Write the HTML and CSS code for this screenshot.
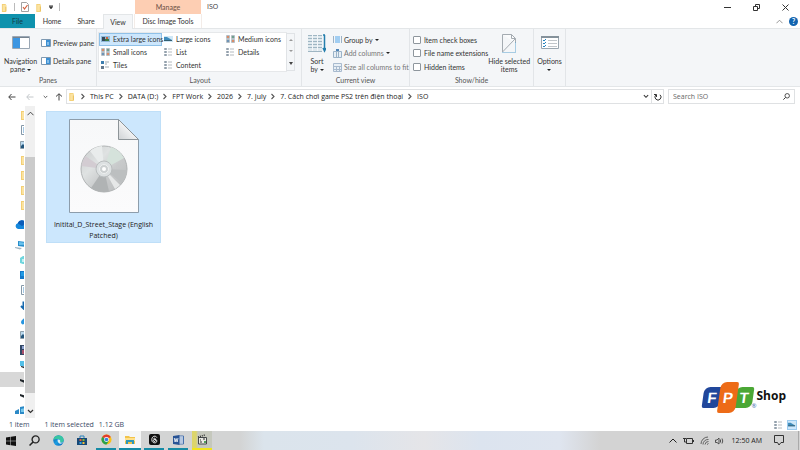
FILE: index.html
```html
<!DOCTYPE html>
<html lang="en">
<head>
<meta charset="utf-8">
<title>ISO</title>
<link rel="stylesheet" href="styles.css">
</head>
<body>
<svg class="defs" aria-hidden="true">
  <defs>
    <linearGradient id="disc-fill" x1="0" y1="0" x2="1" y2="1"><stop offset="0" stop-color="#c9cccd"/><stop offset=".35" stop-color="#dfe2e2"/><stop offset=".6" stop-color="#c8cacb"/><stop offset="1" stop-color="#b9bbbc"/></linearGradient>
    <linearGradient id="sheet-fill" x1="0" y1="0" x2="0" y2="1"><stop offset="0" stop-color="#f7f8f9"/><stop offset="1" stop-color="#fbfbfc"/></linearGradient>
    <linearGradient id="fold-fill" x1="0" y1="1" x2="1" y2="0"><stop offset="0" stop-color="#cfd2d4"/><stop offset=".5" stop-color="#f1f2f3"/><stop offset="1" stop-color="#fff"/></linearGradient>
    <linearGradient id="edge-fill" x1="0" y1="0" x2="1" y2="1"><stop offset="0" stop-color="#0c59a4"/><stop offset=".5" stop-color="#1b9de2"/><stop offset="1" stop-color="#0a63b8"/></linearGradient>
  </defs>
  <symbol id="folder" viewBox="0 0 8 10"><path d="M1 1h4l1 1v8H1z" fill="#f3cf74"/><path d="M2 2h4v7H2z" fill="#fbe3a1"/><path d="M5 4h1v5H5z" fill="#e9bd55"/></symbol>
  <symbol id="doc" viewBox="0 0 8 10"><path d="M1.5.5h6v9h-6z" fill="#fff" stroke="#8598a8"/><path d="M3 3h4M3 5h4M3 7h4" stroke="#4b92c9"/></symbol>
  <symbol id="picture" viewBox="0 0 8 10"><path d="M.5 1.5h7v7h-7z" fill="#b9d9ef" stroke="#8fa0ac"/><path d="M1 6l2-2 2 2 3-1v3H1z" fill="#24567c"/></symbol>
  <symbol id="cloud" viewBox="0 0 14 10"><path d="M3 9a3 3 0 0 1-.3-5.8A4.5 4.5 0 0 1 11 3a3 3 0 0 1 0 6z" fill="#1688dc"/><path d="M2.700 3.200A4.500 4.500 0 0 1 11 3L7 6z" fill="#0a5cb9"/></symbol>
  <symbol id="pc" viewBox="0 0 12 10"><path d="M3 1l8 1v5l-8-1z" fill="#278dcb"/><path d="M4 2l6 .8v2L4 5z" fill="#69c3ee"/><path d="M0 7l7 1-2 1.500L0 8z" fill="#9fb3bf"/></symbol>
  <symbol id="cube" viewBox="0 0 8 10"><path d="M0 3l3-2h5v8H3L0 8z" fill="#6ed5dd"/><path d="M2 4h4v3H2z" fill="#c3f1f2"/></symbol>
  <symbol id="desktop" viewBox="0 0 8 10"><path d="M0 1h8v8H0z" fill="#1479c9"/><path d="M1 2h6v4H1z" fill="#219ae4"/></symbol>
  <symbol id="down" viewBox="0 0 8 10"><path d="M3.500 1.500v7M1 6l3 3 3-3" fill="none" stroke="#1769ae" stroke-width="2"/></symbol>
  <symbol id="note" viewBox="0 0 8 10"><path d="M1 7c1-3 3-3 4-5v6c-1 2-4 2-4-1z" fill="#2795df"/></symbol>
  <symbol id="film" viewBox="0 0 8 10"><path d="M0 0h8v10H0z" fill="#334865"/><path d="M2 1h6v3H2z" fill="#8fa2d1"/><path d="M2 5h6v4H2z" fill="#a8516c"/></symbol>
  <symbol id="osdrive" viewBox="0 0 8 10"><path d="M0 1h8v5H0z" fill="#53bfe8"/><path d="M1 6l5 1v2L1 7z" fill="#25313b"/></symbol>
  <symbol id="drive" viewBox="0 0 8 10"><path d="M0 4l6 2v2.500L0 6z" fill="#20262b"/></symbol>
  <symbol id="network" viewBox="0 0 12 10"><path d="M0 6l4-2v5H0zM5 2l6-1v8H5z" fill="#2b89c6"/><path d="M6 4l4-1v4H6z" fill="#76c8ec"/></symbol>
  <symbol id="pane-left" viewBox="0 0 18 13"><path d="M.5.5h17v12H.5z" fill="#fff" stroke="#9aa7b4"/><path d="M1 1h7v11H1z" fill="#3c96e2"/><path d="M1 1h16v1H1z" fill="#76838f"/></symbol>
  <symbol id="pane-right" viewBox="0 0 10 8"><path d="M.5.5h9v7h-9z" fill="#fff" stroke="#7d99b2"/><path d="M5 1h4v6H5z" fill="#3b8fd3"/><path d="M6 3h2v3H6z" fill="#83bce8"/></symbol>
  <symbol id="thumb" viewBox="0 0 9 8"><path d="M0 1h9v6H0z" fill="#8fb9d7"/><path d="M1 2h3v4H1z" fill="#35495a"/><path d="M4 4h4v2H4z" fill="#3d7b42"/><path d="M5 2h2v2H5z" fill="#c9643b"/></symbol>
  <symbol id="thumb-large" viewBox="0 0 9 8"><path d="M0 1h9v6H0z" fill="#cfe7f6"/><path d="M0 2h3l5 3v1H0z" fill="#3f8dbd"/><path d="M0 5h8v1H0z" fill="#345f72"/></symbol>
  <symbol id="thumb-grid" viewBox="0 0 9 8"><path d="M.5.5h3v3h-3zM5.500.5h3v3h-3zM.5 4.500h3v3h-3zM5.500 4.500h3v3h-3z" fill="#eef2f4" stroke="#b5bec5"/><path d="M1 1h2v2H1zM6 5h2v2H6z" fill="#d98c68"/><path d="M6 1h2v2H6z" fill="#6fa18d"/><path d="M1 5h2v2H1z" fill="#6d93b6"/></symbol>
  <symbol id="thumb-list" viewBox="0 0 9 8"><path d="M.5.5h2v1h-2zM.5 3.500h2v1h-2zM.5 6.500h2v1h-2z" fill="#c8dbe8" stroke="#94a1ac"/><path d="M4 1h4M4 4h4M4 7h4" stroke="#b4babf"/></symbol>
  <symbol id="thumb-tiles" viewBox="0 0 9 8"><path d="M0 0h3v3H0z" fill="#3c7eaf"/><path d="M0 5h3v3H0z" fill="#64798c"/><path d="M4 1h4M4 3h2M4 6h4" stroke="#9fa9b0"/></symbol>
  <symbol id="columns" viewBox="0 0 9 9"><path d="M.5 1v7M8.500 1v7" stroke="#9cb2c5"/><path d="M2 1h5v7H2z" fill="#a2cef2"/></symbol>
  <symbol id="columns-add" viewBox="0 0 9 9"><path d="M.5 2.500h8v6h-8zM3.500 2v6M5.500 2v6" fill="#e8eff5" stroke="#9bb3c8"/><path d="M3 0h3v2H3z" fill="#4f85b8"/></symbol>
  <symbol id="columns-fit" viewBox="0 0 9 9"><path d="M.5.5h8v8h-8zM0 3.500h9M3.500 3v6M6.500 3v6M0 6.500h9" fill="#e8eff5" stroke="#a8bace"/></symbol>
  <symbol id="sort" viewBox="0 0 18 19"><path d="M0 1h14v17H0z" fill="#dfe9ee"/><path d="M0 1.500h14M0 4.500h14M0 7.500h14M0 10.500h14M0 13.500h14M0 17.500h14" stroke="#9fb6c3"/><path d="M4.500 1v16M9.500 1v16" stroke="#f4f6f9"/><path d="M16.500 1v15M15 14l1.500 3 1.500-3M15 1h2" fill="none" stroke="#237eac" stroke-width="1.500"/></symbol>
  <symbol id="hide" viewBox="0 0 15 19"><path d="M.5.5h9l4 4V9M.5.5V18" fill="#fafbfc" stroke="#a4abb1"/><path d="M9.500.5v4h4" fill="none" stroke="#a4abb1"/><path d="M.5 18L13 5" stroke="#a4abb1"/><path d="M.5 18.500h13V8" fill="none" stroke="#5aa3cf" stroke-dasharray="1 1"/></symbol>
  <symbol id="options" viewBox="0 0 18 13"><path d="M.5.5h17v12H.5z" fill="#fff" stroke="#9aa6af"/><path d="M0 0h18v2H0z" fill="#85929b"/><path d="M2 4l1 1 2-2M2 7l1 1 2-2M2 10l1 1 2-2" fill="none" stroke="#2583be"/><path d="M7 4.500h9M7 7.500h9M7 10.500h9" stroke="#c1c6ca"/></symbol>
  <symbol id="chev-right" viewBox="0 0 4 7"><path d="M.5 1L3 3.500.5 6" fill="none" stroke="#555" stroke-width="1.100"/></symbol>
  <symbol id="chev-down" viewBox="0 0 7 5"><path d="M1 1l2.500 2.500L6 1" fill="none" stroke="currentColor" stroke-width="1.200"/></symbol>
  <symbol id="chev-up" viewBox="0 0 8 5"><path d="M.5 4.500L4 1l3.500 3.500" fill="none" stroke="currentColor"/></symbol>
  <symbol id="arrow" viewBox="0 0 8 8"><path d="M7.500 4H.8M3.500 1L.8 4l2.700 3" fill="none" stroke="currentColor"/></symbol>
  <symbol id="lens" viewBox="0 0 10 10"><circle cx="6" cy="4" r="3.200" fill="none" stroke="currentColor" stroke-width="1.200"/><path d="M3.700 6.300L.5 9.500" stroke="currentColor" stroke-width="1.400"/></symbol>
</svg>

<header class="titlebar">
  <div class="quick">
    <svg width="7" height="9"><use href="#folder"/></svg>
    <span class="tick"></span>
    <button aria-label="Properties"><svg width="8" height="10" viewBox="0 0 8 10"><path d="M.5.5h5l2 2v7h-7z" fill="#fff" stroke="#a2a2a2"/><path d="M2 5l1.500 2L6.500 3" fill="none" stroke="#d4613f" stroke-width="1.200"/></svg></button>
    <button aria-label="New folder"><svg width="8" height="9"><use href="#folder"/></svg></button>
    <button aria-label="Customize"><svg width="4" height="4" viewBox="0 0 4 4"><path d="M0 .5h4M0 1.500h4L2 4z" fill="#333" stroke="#333" stroke-width=".5"/></svg></button>
    <span class="tick"></span>
  </div>
  <div class="context">Manage</div>
  <h1>ISO</h1>
  <div class="window-buttons">
    <button aria-label="Minimize"><svg width="7" height="7" viewBox="0 0 7 7"><path d="M0 3.500h7" stroke="#333"/></svg></button>
    <button aria-label="Restore"><svg width="7" height="7" viewBox="0 0 7 7"><path d="M.5 2.500h4v4h-4zM2.500 2V.5h4v4H5" fill="none" stroke="#333"/></svg></button>
    <button aria-label="Close"><svg width="7" height="7" viewBox="0 0 7 7"><path d="M.5.5l6 6M6.500.5l-6 6" stroke="#333"/></svg></button>
  </div>
</header>

<nav class="tabs">
  <button class="file">File</button>
  <button class="tab">Home</button>
  <button class="tab">Share</button>
  <button class="tab current">View</button>
  <button class="tab tools">Disc Image Tools</button>
  <div class="help">
    <button aria-label="Collapse ribbon"><svg width="7" height="5"><use href="#chev-up"/></svg></button>
    <button class="help-mark">?</button>
  </div>
</nav>

<section class="ribbon">
  <div class="group panes">
    <div class="group-body">
      <button class="big"><svg width="18" height="13"><use href="#pane-left"/></svg><span>Navigation<br>pane <i class="caret"></i></span></button>
      <div class="pane-list">
        <button class="item"><svg width="10" height="8"><use href="#pane-right"/></svg>Preview pane</button>
        <button class="item"><svg width="10" height="8"><use href="#pane-right"/></svg>Details pane</button>
      </div>
    </div>
    <h2>Panes</h2>
  </div>
  <div class="group layout">
    <div class="group-body">
      <div class="gallery">
        <button class="item selected"><svg width="9" height="8"><use href="#thumb"/></svg>Extra large icons</button>
        <button class="item"><svg width="9" height="8"><use href="#thumb-large"/></svg>Large icons</button>
        <button class="item"><svg width="9" height="8"><use href="#thumb-grid"/></svg>Medium icons</button>
        <button class="item"><svg width="9" height="8"><use href="#thumb-grid"/></svg>Small icons</button>
        <button class="item"><svg width="9" height="8"><use href="#thumb-list"/></svg>List</button>
        <button class="item"><svg width="9" height="8"><use href="#thumb-list"/></svg>Details</button>
        <button class="item"><svg width="9" height="8"><use href="#thumb-tiles"/></svg>Tiles</button>
        <button class="item"><svg width="9" height="8"><use href="#thumb-list"/></svg>Content</button>
      </div>
      <div class="spinner">
        <button aria-label="Previous row"><i class="caret up"></i></button>
        <button aria-label="Next row"><i class="caret faint"></i></button>
        <button aria-label="More layouts"><i class="caret more"></i></button>
      </div>
    </div>
    <h2>Layout</h2>
  </div>
  <div class="group view">
    <div class="group-body">
      <button class="big sort"><svg width="18" height="19"><use href="#sort"/></svg><span>Sort<br>by <i class="caret"></i></span></button>
      <div class="stack">
        <button class="item"><svg width="9" height="9"><use href="#columns"/></svg>Group by <i class="caret"></i></button>
        <button class="item dim"><svg width="9" height="9"><use href="#columns-add"/></svg>Add columns <i class="caret"></i></button>
        <button class="item dim"><svg width="9" height="9"><use href="#columns-fit"/></svg>Size all columns to fit</button>
      </div>
    </div>
    <h2>Current view</h2>
  </div>
  <div class="group show">
    <div class="group-body">
      <div class="stack">
        <label class="item"><input type="checkbox">Item check boxes</label>
        <label class="item"><input type="checkbox">File name extensions</label>
        <label class="item"><input type="checkbox">Hidden items</label>
      </div>
      <button class="big"><svg width="15" height="19"><use href="#hide"/></svg><span>Hide selected<br>items</span></button>
    </div>
    <h2>Show/hide</h2>
  </div>
  <div class="group options">
    <div class="group-body">
      <button class="big"><svg width="18" height="13"><use href="#options"/></svg><span>Options<br><i class="caret"></i></span></button>
    </div>
  </div>
</section>

<div class="addressbar">
  <div class="history">
    <button aria-label="Back"><svg width="8" height="8"><use href="#arrow"/></svg></button>
    <button aria-label="Forward" class="off"><svg width="8" height="8"><use href="#arrow"/></svg></button>
    <button aria-label="Recent locations" class="small"><svg width="5" height="4"><use href="#chev-down"/></svg></button>
    <button aria-label="Up" class="upward"><svg width="8" height="8"><use href="#arrow"/></svg></button>
  </div>
  <div class="path">
    <svg width="8" height="9"><use href="#folder"/></svg>
    <svg width="4" height="7"><use href="#chev-right"/></svg><a href="#">This PC</a>
    <svg width="4" height="7"><use href="#chev-right"/></svg><a href="#">DATA (D:)</a>
    <svg width="4" height="7"><use href="#chev-right"/></svg><a href="#">FPT Work</a>
    <svg width="4" height="7"><use href="#chev-right"/></svg><a href="#">2026</a>
    <svg width="4" height="7"><use href="#chev-right"/></svg><a href="#">7. July</a>
    <svg width="4" height="7"><use href="#chev-right"/></svg><a href="#">7. Cách chơi game PS2 trên điện thoại</a>
    <svg width="4" height="7"><use href="#chev-right"/></svg><a href="#">ISO</a>
    <div class="path-end">
      <button aria-label="Previous locations"><svg width="6" height="5"><use href="#chev-down"/></svg></button>
      <button aria-label="Refresh" class="refresh"><svg width="8" height="8" viewBox="0 0 8 8"><path d="M6 1.800A3 3 0 1 1 2 1.800M0 1.500h2.500V4" fill="none" stroke="#333"/></svg></button>
    </div>
  </div>
  <div class="search">
    <input type="search" placeholder="Search ISO" aria-label="Search ISO">
    <svg width="7" height="7"><use href="#lens"/></svg>
  </div>
</div>

<main>
  <aside class="tree">
    <ul>
      <li><svg width="8" height="10"><use href="#folder"/></svg></li>
      <li><svg width="8" height="10"><use href="#doc"/></svg></li>
      <li><svg width="8" height="10"><use href="#picture"/></svg></li>
      <li><svg width="8" height="10"><use href="#folder"/></svg></li>
      <li><svg width="8" height="10"><use href="#folder"/></svg></li>
      <li><svg width="8" height="10"><use href="#folder"/></svg></li>
      <li><svg width="8" height="10"><use href="#folder"/></svg></li>
    </ul>
    <ul>
      <li class="root"><svg width="14" height="10"><use href="#cloud"/></svg></li>
    </ul>
    <ul>
      <li class="root"><svg width="12" height="10"><use href="#pc"/></svg></li>
      <li><svg width="8" height="10"><use href="#cube"/></svg></li>
      <li><svg width="8" height="10"><use href="#desktop"/></svg></li>
      <li><svg width="8" height="10"><use href="#doc"/></svg></li>
      <li><svg width="8" height="10"><use href="#down"/></svg></li>
      <li><svg width="8" height="10"><use href="#note"/></svg></li>
      <li><svg width="8" height="10"><use href="#picture"/></svg></li>
      <li><svg width="8" height="10"><use href="#film"/></svg></li>
      <li><svg width="8" height="10"><use href="#osdrive"/></svg></li>
      <li class="active"><svg width="8" height="10"><use href="#drive"/></svg></li>
      <li><svg width="8" height="10"><use href="#drive"/></svg></li>
      <li class="root"><svg width="12" height="10"><use href="#network"/></svg></li>
    </ul>
  </aside>
  <div class="scrollbar">
    <button aria-label="Scroll up"><svg width="7" height="5"><use href="#chev-up"/></svg></button>
    <div class="track"><div class="thumb"></div></div>
    <button aria-label="Scroll down"><svg width="7" height="5"><use href="#chev-down"/></svg></button>
  </div>
  <section class="files">
    <figure class="tile">
      <svg width="70" height="94" viewBox="0 0 70 94">
        <path d="M.5.5h49l20 20v73H.5z" fill="url(#sheet-fill)" stroke="#8d9dab"/>
        <path d="M49.500.5v20h20z" fill="url(#fold-fill)" stroke="#8d9498"/>
        <circle cx="35" cy="50" r="23" fill="url(#disc-fill)" stroke="#b0b3b4"/>
        <path d="M35 50L21 32a23 23 0 0 1 12-5z" fill="#e9ecec"/>
        <path d="M35 50L42 28a23 23 0 0 1 13 11z" fill="#d5e2db"/>
        <path d="M35 50L12.500 47a23 23 0 0 1 4-10z" fill="#d3ccd2"/>
        <path d="M35 50L58 51a23 23 0 0 1-5 13z" fill="#bcbfc0"/>
        <path d="M35 50L51 66a23 23 0 0 1-5 4z" fill="#e6e8e8"/>
        <path d="M35 50L22 69a23 23 0 0 0 18 3.500z" fill="#b0b3b4"/>
        <circle cx="35" cy="50" r="8" fill="#dde1e2" stroke="#b9bdbe"/>
        <circle cx="35" cy="50" r="4.500" fill="#ccd0d1" stroke="#eff1f1"/>
        <circle cx="35" cy="50" r="2" fill="#fff"/>
      </svg>
      <figcaption>Initital_D_Street_Stage (English Patched)</figcaption>
    </figure>
  </section>
  <div class="brand">
    <div class="marks"><span class="mark blue"><b>F</b></span><span class="mark orange"><b>P</b></span><span class="mark green"><b>T</b></span></div>
    <span class="registered">®</span>
    <strong>Shop</strong>
  </div>
</main>

<footer class="status">
  <span class="cell">1 item</span>
  <span class="cell">1 item selected</span>
  <span class="cell size">1.12 GB</span>
  <div class="modes">
    <button aria-label="Details view"><svg width="9" height="8"><use href="#thumb-list"/></svg></button>
    <button aria-label="Large icons view" class="on"><svg width="8" height="7"><use href="#thumb-large"/></svg></button>
  </div>
</footer>

<nav class="taskbar">
  <button aria-label="Start" class="start"><svg width="10" height="10" viewBox="0 0 10 10"><path d="M0 1.500l4.500-.7v4H0zM5 .700L10 0v4.800H5zM0 5.300h4.500v4L0 8.600zM5 5.300h5V10l-5-.7z" fill="#111"/></svg></button>
  <button aria-label="Search"><svg width="11" height="11"><use href="#lens"/></svg></button>
  <button aria-label="Edge"><svg width="11" height="11" viewBox="0 0 11 11"><circle cx="5.500" cy="5.500" r="5.200" fill="url(#edge-fill)"/><path d="M.4 5A5.200 5.200 0 0 1 10.700 5c.1 2-2 2.800-3.700 2.200C8 5 6 3.700 4 4 2 4 .8 5 .4 5z" fill="#38c6a2"/><path d="M4.600 4.600c2-.5 3.300 1 2.400 2.600 1 .8 2.500.5 3.300-.1C8.500 10 4 9 4.600 4.600z" fill="#d9eef5"/></svg></button>
  <button aria-label="Store"><svg width="10" height="11" viewBox="0 0 10 11"><path d="M3 3V1h4v2" fill="none" stroke="#2682bd"/><path d="M0 3h10v7H0z" fill="#174977"/><path d="M2.500 4h2v2h-2z" fill="#e95b3c"/><path d="M5.500 4h2v2h-2z" fill="#81bc38"/><path d="M2.500 7h2v2h-2z" fill="#36a5e8"/><path d="M5.500 7h2v2h-2z" fill="#f5bf35"/></svg></button>
  <button aria-label="Chrome" class="open"><svg width="11" height="11" viewBox="0 0 12 12"><circle cx="6" cy="6" r="5.500" fill="#fbc116"/><path d="M6 6L1.200 3.300A5.500 5.500 0 0 1 10.800 3.300z" fill="#e33b2e"/><path d="M6 6L1.200 3.300A5.500 5.500 0 0 0 6 11.500l2.500-4z" fill="#2ba14b"/><circle cx="6" cy="6" r="2.700" fill="#fff"/><circle cx="6" cy="6" r="2" fill="#3b7de0"/></svg></button>
  <button aria-label="File Explorer" class="open front"><svg width="10" height="10" viewBox="0 0 10 10"><path d="M0 1h4l1 1h5v7H0z" fill="#f1c34a"/><path d="M0 3h10v3H0z" fill="#ffe08a"/><path d="M1 5h8v4H7V7H3v2H1z" fill="#2f97b7"/></svg></button>
  <button aria-label="Threads" class="open"><svg width="11" height="11" viewBox="0 0 11 11"><rect width="11" height="11" rx="2" fill="#111"/><path d="M7.800 3.500C7 1.500 3 1.500 2.800 5.500s4.900 4.200 5 1.700C8 5 4.200 5 4.200 6.500s3 1.500 2.500-1C6.500 4 5 4 4.500 4.600" fill="none" stroke="#fff" stroke-width=".9"/></svg></button>
  <button aria-label="Word" class="open"><svg width="11" height="10" viewBox="0 0 11 10"><path d="M5.500 1h5v8h-5z" fill="#fff" stroke="#4771ad"/><path d="M6 3h4M6 5h4M6 7h4" stroke="#6e91c3"/><path d="M0 1l6.500-1v10L0 9z" fill="#285395"/><path d="M1.300 3l.8 4 1-3.500 1 3.500.9-4" fill="none" stroke="#fff" stroke-width=".8"/></svg></button>
  <button aria-label="Recorder" class="open alert"><svg width="11" height="11" viewBox="0 0 11 11"><path d="M1.500 3.500h8v6.500h-8z" fill="#e8e9e2" stroke="#44484a"/><path d="M1 3l7-2" stroke="#333" stroke-width="1.500" stroke-dasharray="1 1"/><path d="M3 6h1M6 5h2M3 8h2" stroke="#333"/><path d="M7 7h2v2H7z" fill="#53a05d"/></svg></button>
  <div class="tray">
    <svg width="8" height="5"><use href="#chev-up"/></svg>
    <svg width="11" height="8" viewBox="0 0 11 8"><path d="M3.500 1.500h6v5h-6zM10.500 3v2M0 1.500h3M1.500 1.500v3.500h2" fill="none" stroke="#333"/></svg>
    <svg width="9" height="9" viewBox="0 0 9 9"><path d="M1 8A7 7 0 0 1 8 1M3 8.500A5 5 0 0 1 8.500 3.500M5 8.500A3.500 3.500 0 0 1 8.500 5.500M7 8.500L8.500 7.500" fill="none" stroke="#555" stroke-width=".9"/></svg>
    <svg width="9" height="8" viewBox="0 0 9 8"><path d="M.5 3h1.500l2-2v6L2 5.500H.5zM5.500 2.500v3M7 1.500q1.500 2.500 0 5" fill="none" stroke="#444" stroke-width=".9"/></svg>
    <time>12:50 AM</time>
    <button aria-label="Notifications"><svg width="10" height="11" viewBox="0 0 10 11"><path d="M.5.5h9v7H7L5 10 3.500 7.500h-3z" fill="none" stroke="#333"/></svg></button>
    <span class="peek"></span>
  </div>
</nav>
</body>
</html>
```
FILE: styles.css
```css
* { box-sizing: border-box; }

body {
  margin: 0;
  min-height: 100vh;
  display: grid;
  grid-template-rows: auto auto auto auto 1fr auto auto;
  background: #fff;
  color: #333;
  font: 7px/8px "Open Sans", "Noto Sans", sans-serif;
}

button {
  display: flex;
  align-items: center;
  justify-content: center;
  margin: 0;
  padding: 0;
  border: 0;
  background: none;
  color: inherit;
  font: inherit;
  white-space: nowrap;
}

svg { display: block; flex: none; }
ul { margin: 0; padding: 0; list-style: none; }
h1, h2 { margin: 0; font: inherit; }
.defs { position: absolute; width: 0; height: 0; }

.caret {
  display: inline-block;
  vertical-align: middle;
  border: 2px solid transparent;
  border-top-color: #222;
  border-bottom: 0;
}
.caret.up { border-top: 0; border-bottom: 2px solid #999; }
.caret.faint { border-top-color: #999; }
.caret.more { border-top-color: #444; border-width: 3px 2px 0; }

/* Title bar */
.titlebar { display: flex; height: 14px; }
.quick { display: flex; align-items: center; gap: 6px; width: 135px; padding-left: 1px; }
.tick { width: 1px; height: 8px; background: #bbb; }
.context { width: 66px; background: #fdceb3; color: #6b4f43; line-height: 14px; text-align: center; }
.titlebar h1 { padding-left: 6px; line-height: 14px; }
.window-buttons { display: flex; gap: 22px; margin-left: auto; padding-right: 11px; }

/* Title, tabs and ribbon share a narrower face than the file area */
.context, .tabs, .ribbon { font-family: Lato, "Open Sans", sans-serif; }

/* Ribbon tabs */
.tabs { display: flex; height: 14px; }
.file { width: 35px; background: #0f92ad; color: #123b46; }
.tab { width: 34px; }
.current { height: 15px; background: #f4f6f8; border: 1px solid #e3e6e8; border-bottom: 0; width: 30px; z-index: 1; }
.tools { width: 68px; margin-left: 1px; border: 1px solid #f3ece8; border-width: 0 1px; }
.help { display: flex; align-items: center; gap: 6px; margin-left: auto; padding-right: 2px; color: #888; }
.help-mark { width: 9px; height: 9px; border-radius: 50%; background: #1264b0; color: #fff; font-weight: 700; }

/* Ribbon */
.ribbon { display: flex; height: 59px; background: #f4f6f8; border: 1px solid #e3e6e8; border-width: 1px 0; }
.group { display: flex; flex-direction: column; justify-content: space-between; padding: 4px 0 1px; border-right: 1px solid #e2e5e8; }
.group h2 { color: #555; line-height: 10px; text-align: center; }
.group-body { display: flex; height: 41px; }
.item { display: flex; align-items: center; justify-content: flex-start; gap: 3px; white-space: nowrap; }
.item.dim { color: #777; }
.big { flex-direction: column; justify-content: space-between; }
.big svg { margin-top: 3px; }
.big span { height: 17px; }

.panes { width: 97px; }
.panes .big { width: 41px; }
.pane-list { display: grid; padding: 1px 0 4px; }
.pane-list .item { gap: 2px; }

.layout { width: 205px; padding-left: 2px; }
.gallery {
  display: grid;
  grid-template-columns: 63px 62px 62px;
  grid-template-rows: repeat(3, 1fr);
  height: 38px;
  background: #fff;
  outline: 1px solid #e6e8ea;
}
.gallery .item { padding-left: 2px; }
.gallery .selected { padding-left: 1px; background: #cce6fc; border: 1px solid #8fc1e8; }
.spinner { display: grid; width: 9px; height: 38px; border: 1px solid #e0e3e6; }

.view { width: 108px; }
.view .big { width: 30px; }
.stack { display: grid; height: 41px; grid-template-rows: repeat(3, 1fr); }
.view .stack { margin-left: 1px; }
.view .item { gap: 2px; }
.sort svg, .show .big svg { margin-top: 1px; }

.show { width: 124px; }
.show .group-body { justify-content: space-between; padding: 0 5px 0 3px; }
.show input { appearance: none; width: 8px; height: 8px; margin: 0; border: 1px solid #8e969d; border-radius: 1px; background: #fff; }

.options { width: 32px; }
.options .big { width: 31px; }

/* Address bar */
.addressbar { display: flex; gap: 4px; height: 19px; padding: 2px 5px 2px 0; }
.history { display: flex; align-items: center; gap: 10px; width: 62px; padding-left: 8px; color: #444; }
.history .off { color: #c4c8cb; }
.history .small { margin: 0 -3px 0 -1px; }
.upward svg { transform: rotate(90deg); }
.path { display: flex; flex: 1; align-items: center; gap: 5px; padding-left: 1px; border: 1px solid #dfe1e3; }
.path a { color: #222; text-decoration: none; white-space: nowrap; }
.path-end { display: flex; align-items: stretch; align-self: stretch; margin-left: auto; gap: 2px; }
.refresh { width: 12px; border-left: 1px solid #dfe1e3; }
.search { display: flex; align-items: center; width: 127px; padding: 0 4px; border: 1px solid #dfe1e3; }
.search input { flex: 1; min-width: 0; padding: 0; border: 0; outline: 0; background: none; color: #333; font: inherit; }
.search input::placeholder { color: #666; opacity: 1; }

/* Navigation tree and files */
main { position: relative; display: flex; }
.tree { width: 25px; padding-top: 1px; overflow: hidden; border-right: 1px solid #fff; }
.tree ul + ul { margin-top: 5px; }
.tree li { display: flex; align-items: center; height: 15px; padding-left: 20px; }
.tree .root { padding-left: 15px; }
.tree .active { background: #d8d8d8; }
.scrollbar { display: flex; flex-direction: column; width: 10px; background: #f0f0f0; }
.scrollbar button { height: 14px; }
.track { flex: 1; padding: 37px 0 11px; }
.thumb { height: 100%; background: #cbcbcb; }
.files { flex: 1; padding: 5px 0 0 11px; }
.tile { width: 115px; margin: 0; padding: 7px 6px 1px; background: #cce7fd; border: 1px solid #bfdff8; }
.tile svg { margin: 0 auto 6px; }
.tile figcaption { color: #222; line-height: 11px; text-align: center; }

.brand { position: absolute; right: 14px; bottom: 5px; display: flex; align-items: center; color: #111; }
.marks { display: flex; align-items: center; }
.mark { display: grid; place-items: center; width: 18px; height: 21px; margin-right: -2px; border-radius: 6px 2px; transform: skewX(-8deg); color: #fff; font: 15px/18px "Liberation Sans", sans-serif; }
.blue { background: #21479b; }
.orange { height: 31px; background: #ed6b17; z-index: 1; }
.green { background: #4ba735; }
.registered { align-self: flex-end; margin-bottom: 3px; color: #356ba9; font-size: 6px; }
.brand strong { font-size: 12px; line-height: 16px; margin-bottom: 4px; }

/* Status bar */
.status { display: flex; align-items: center; height: 13px; padding: 0 4px 0 9px; color: #3b4a66; }
.cell + .cell { margin-left: 15px; }
.cell + .size { margin-left: 5px; }
.modes { display: flex; gap: 5px; margin-left: auto; }
.modes .on { background: #cce7fd; outline: 1px solid #9bcbee; }

/* Taskbar */
.taskbar {
  display: flex;
  height: 19px;
  background: linear-gradient(90deg, #d3d4d4 30%, #dbe4ec 33%, #dce4ed 44%, #e5e5e8 53%, #dce4ef 60%, #dfe5ef 70%, #d3d3d3 75%);
  color: #222;
}
.taskbar > button { width: 20px; margin: 0 2px; color: #222; }
.taskbar > .start { width: 18px; }
.taskbar .open { border-bottom: 2px solid #168ba5; }
.taskbar .front { width: 22px; margin: 0 1px; background: #f5f6f6; }
.taskbar .alert { background: linear-gradient(90deg, #dcd56b 4px, #c5c8bd 6px); border-color: #f2e51b; }
.tray { display: flex; align-items: center; gap: 6px; margin-left: auto; }
.tray time { margin-left: 2px; white-space: nowrap; }
.tray button { margin-left: 6px; }
.peek { align-self: stretch; width: 2px; margin-left: 8px; border-left: 1px solid #aaa; }
```
